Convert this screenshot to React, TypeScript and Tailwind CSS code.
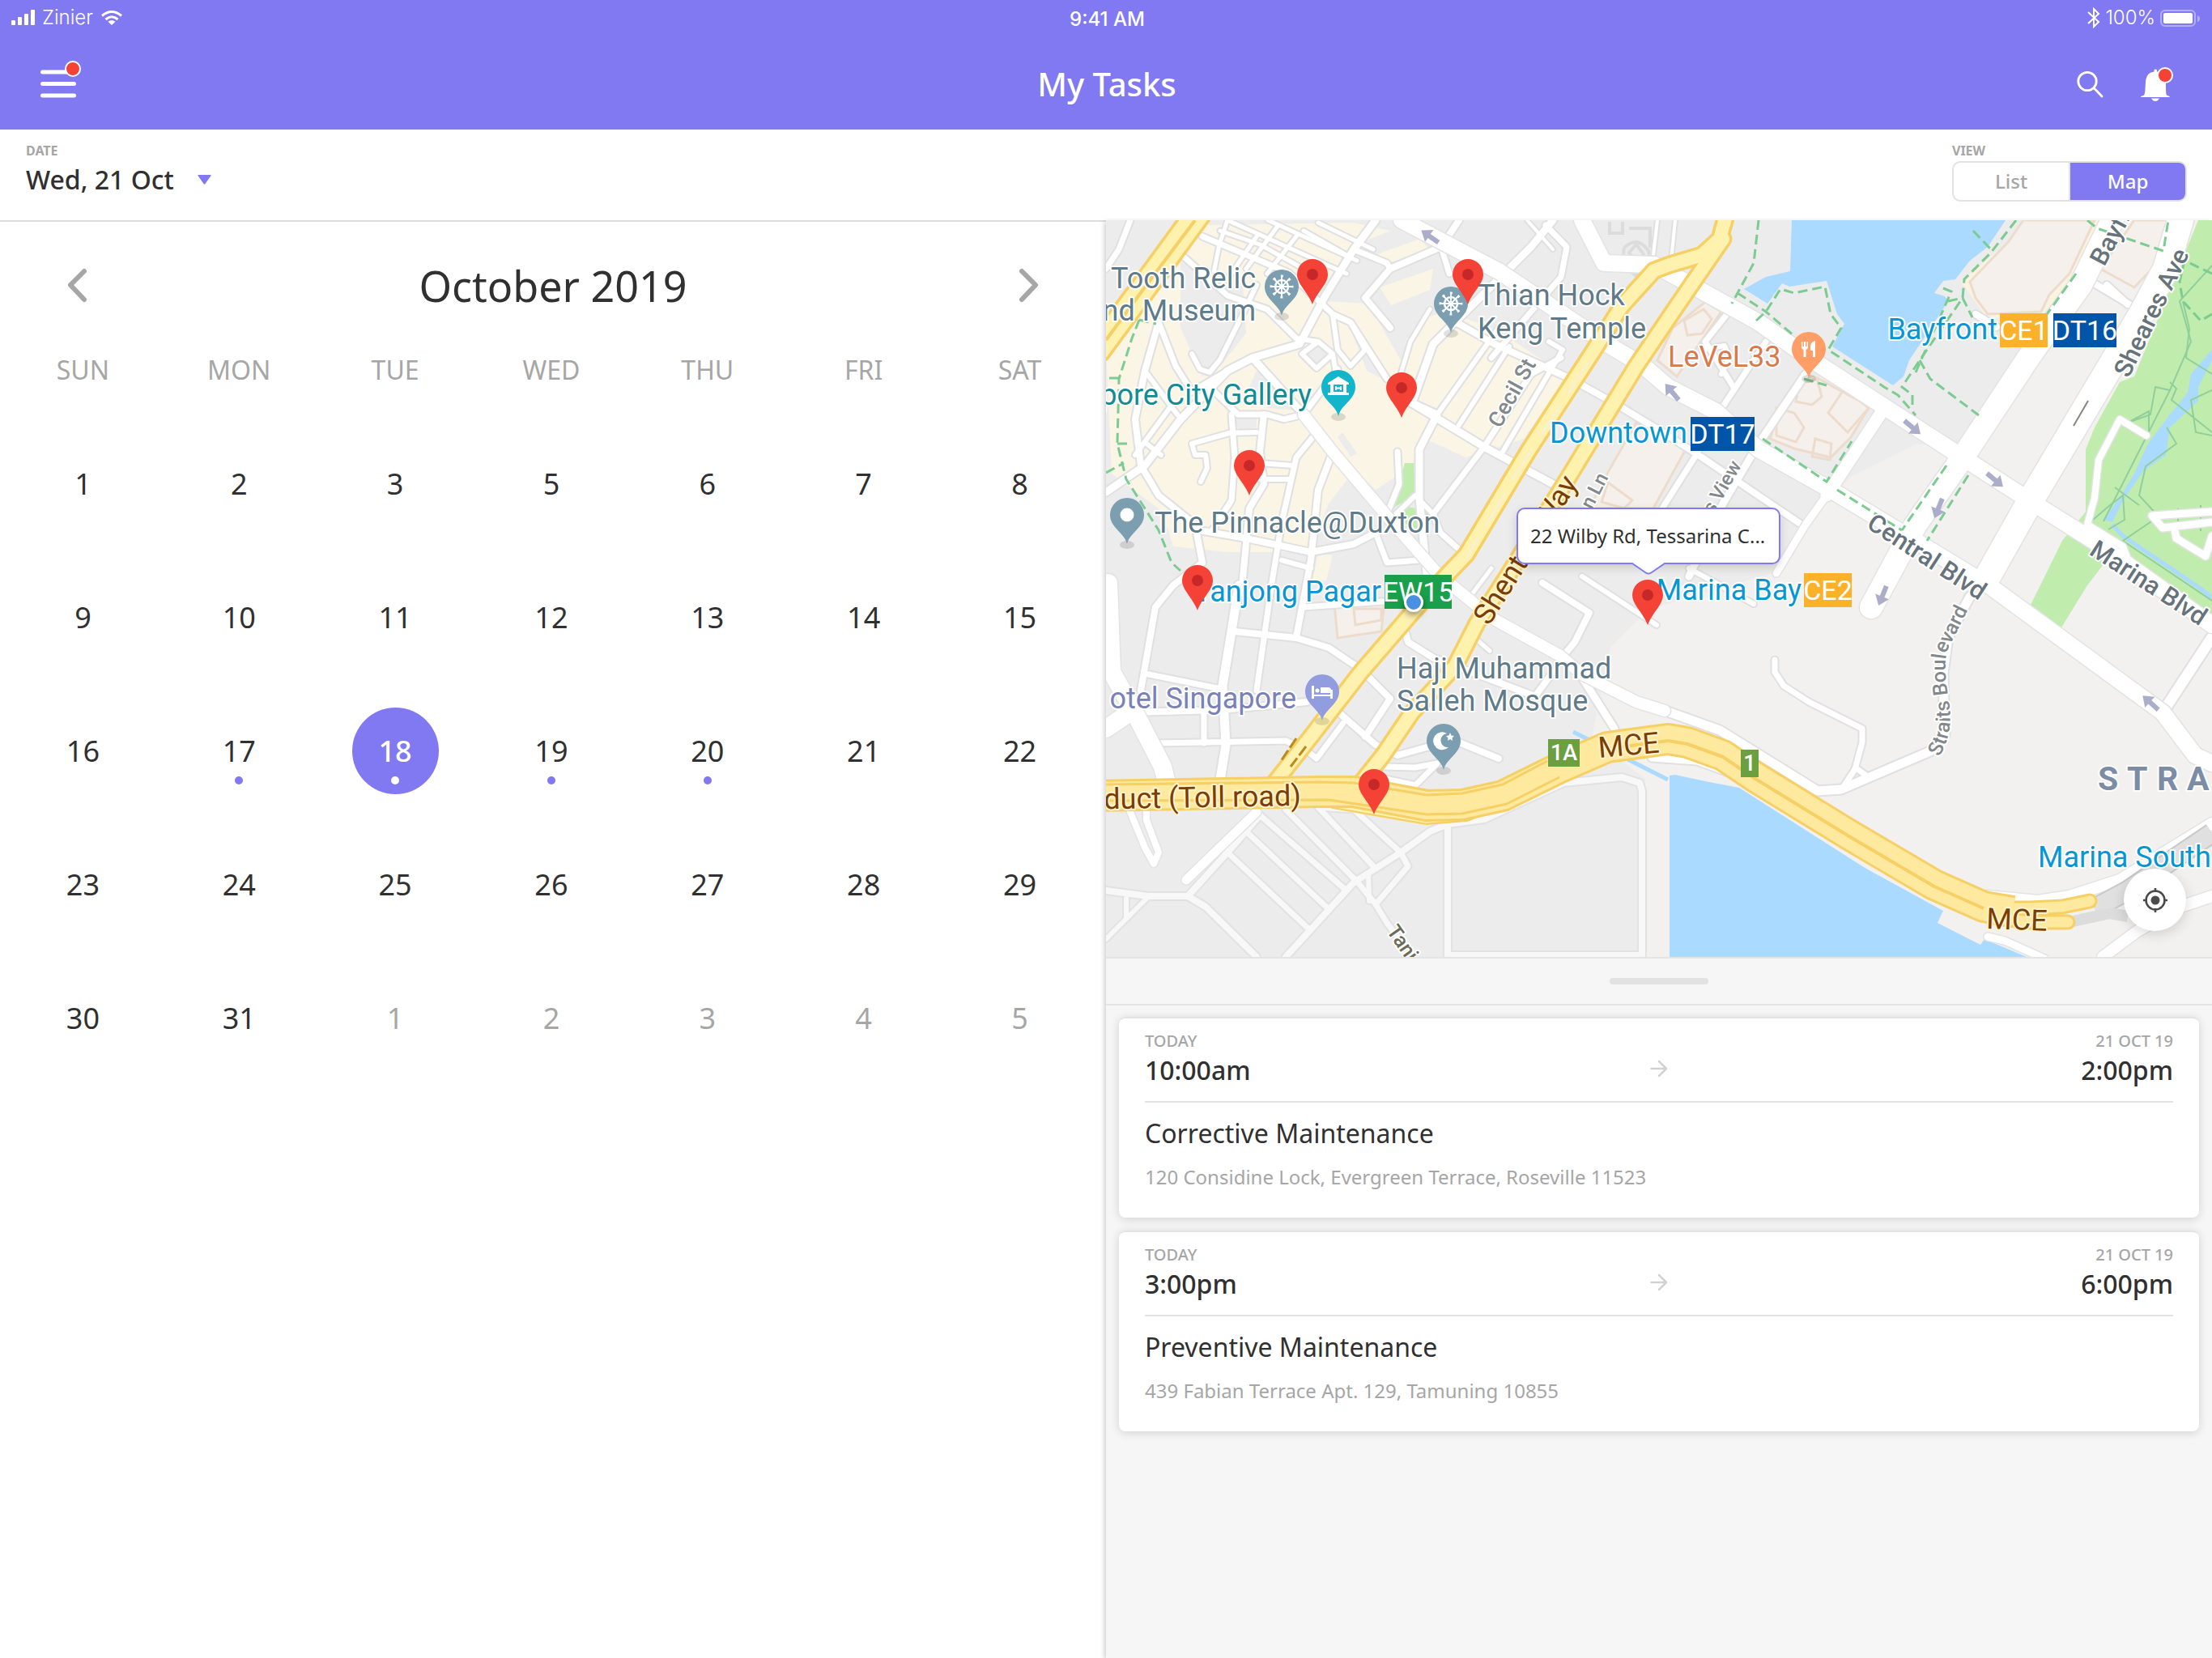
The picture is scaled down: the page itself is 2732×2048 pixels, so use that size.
import React from 'react';

type Line = { d: string; w: number };

const LAND_LIGHT =
  'M1001 276L921 316L864 376L824 436L669 481L623 528L606 608L600 640L666 690V910H1366V0H1240L1049 283Z';

const CREAM = [
  'M123 6L306 3L351 13L302 33L271 100L324 103L364 173L395 120L422 113L484 136L569 193L516 270L444 293L395 270L378 303L333 333L306 310L275 350L252 410H150L83 403L70 360L7 313L0 160L52 106L97 46Z',
  'M333 43L387 23L400 36L338 56Z',
  'M338 83L404 60L400 86L352 105Z',
  'M262 412L280 414L272 445H255Z',
];

const GREY_BLOCKS = [
  'M92 50L168 70L173 140L141 180L119 193L92 133Z',
  'M242 165L262 150L280 165L260 183Z',
  'M157 240H186V256L164 260Z',
  'M186 186L244 236L200 232L176 208Z',
  'M300 128L346 198L322 186Z',
  'M292 262L310 288L302 292L286 268Z',
];

const PARKS = [
  'M369 300H380L382 340L353 356Z',
  'M369 353L400 360L387 383L360 370Z',
  'M1349 0H1366V491L1305 450L1239 416L1212 451L1177 508L1148 491L1142 475L1153 453L1181 396L1210 360V283L1221 256L1252 200L1270 193Z',
];

const WATER = [
  'M847 0L845 63L815 70L788 85L817 103L835 78L844 82L890 75L903 116L912 128L897 156L972 204L985 193L992 173L1014 140L1040 100L1036 94L1023 90L1034 75L1049 73L1067 50L1089 33L1111 0Z',
  'M696 686L703 685L740 693L782 701L939 801L1034 853L1027 868L1080 895L1085 888L1137 910H696Z',
  'M1366 160L1340 190L1336 213L1314 240L1287 276L1270 313L1252 343L1232 370L1243 373L1256 346L1281 310L1309 290L1314 256L1349 223V206L1366 173Z',
];

const BUILDINGS = [
  'M1133 0L1115 26L1067 76L1074 96L1089 116L1155 113L1165 92L1190 66L1221 0Z',
  'M1261 13L1228 60L1270 83L1292 60L1305 26L1312 0H1270Z',
  'M857 196L873 192L943 230L920 268L895 293L850 282L820 270L837 223Z',
  'M740 101L760 113L705 193L681 173L700 133Z',
  'M655 250L716 283L676 356H597L619 313Z',
  'M282 474L344 470L340 508L286 516Z',
];

const BUILDING_DETAIL = [
  'M856 202L878 196L884 218L872 228L852 224Z',
  'M828 232L850 238L862 256L852 274L828 266Z',
  'M912 208L942 232L916 262L892 238Z',
  'M876 270L896 276L894 296L872 292Z',
  'M714 124L738 110L748 122L736 140L718 142Z',
  'M620 324L650 346L640 356L612 348Z',
  'M306 480H340V494L308 500Z',
];

const STREETS: Line[] = [
  { d: 'M119 20L226 65L280 116L302 126L347 196', w: 7 },
  { d: 'M97 46L150 93L199 110L235 146', w: 7 },
  { d: 'M333 0L306 36L271 93L239 153L181 170L150 186L92 246L48 303L0 336', w: 9 },
  { d: 'M65 126L48 186L36 246L43 303L65 340L110 376L119 423L83 451L61 478L43 581', w: 8 },
  { d: 'M65 126L86 180L106 212L150 186', w: 7 },
  { d: 'M106 165L116 184L128 188L141 172L168 118L186 80', w: 6 },
  { d: 'M244 240L220 246L199 240L163 240L128 206', w: 7 },
  { d: 'M181 170L244 240', w: 9 },
  { d: 'M48 186L88 240M36 290L80 230M50 276L68 290', w: 6 },
  { d: 'M244 240L286 184', w: 7 },
  { d: 'M195 240L190 286L195 326L177 356L168 453', w: 8 },
  { d: 'M262 260L235 293L217 373L204 453L186 581', w: 7 },
  { d: 'M280 286L262 333L253 420L235 515', w: 8 },
  { d: 'M155 240L159 293L155 346L130 385', w: 7 },
  { d: 'M115 383L173 393L253 410L306 400L333 386', w: 8 },
  { d: 'M186 262L152 263L106 276L110 290H123L125 306L117 323', w: 6 },
  { d: 'M190 300L231 303M190 320L226 320M217 420L253 430', w: 6 },
  { d: 'M436 0L414 33L351 60L320 96L351 133', w: 8 },
  { d: 'M306 36L347 53L351 60M414 33L424 66', w: 7 },
  { d: 'M235 146L262 150L280 165L260 183L242 165L262 150M280 165L286 200', w: 6 },
  { d: 'M280 116L286 160L302 180L320 160L302 126', w: 6 },
  { d: 'M552 0L525 33L431 126L404 153L378 226L409 240L387 283V343L396 436', w: 9 },
  { d: 'M400 110L376 150L364 190', w: 5 },
  { d: 'M378 226L467 280L552 326', w: 9 },
  { d: 'M427 123L480 153L574 196L628 226L694 266L736 293L859 376', w: 8 },
  { d: 'M485 133L409 240M498 156L436 253', w: 6 },
  { d: 'M543 6L569 33L562 70L476 170M562 170L525 190L467 280L404 363L413 386L440 410', w: 7 },
  { d: 'M547 150L564 160L490 286', w: 6 },
  { d: 'M150 0L140 30L132 70M186 20L150 73M213 6L173 60M235 20L199 66', w: 5 },
  { d: 'M141 13L190 30L244 60M150 0L297 66', w: 5 },
  { d: 'M262 3L330 36M244 13L297 43M200 0L310 50', w: 5 },
  { d: 'M30 0L16 36L0 60M0 120L16 140', w: 7 },
  { d: 'M351 370L382 340L404 363', w: 6 },
  { d: 'M360 286L362 326L347 363', w: 7 },
  { d: 'M333 386L347 423L387 420', w: 7 },
  { d: 'M164 451L155 508L144 575L148 648L141 691', w: 11 },
  { d: 'M159 508L235 516L275 528L315 555L351 591L320 638', w: 8 },
  { d: 'M244 478L342 471', w: 7 },
  { d: 'M30 608L141 605L248 595', w: 8 },
  { d: 'M61 646L222 643L248 655L260 665L293 621', w: 7 },
  { d: 'M48 560L137 578M121 608V646', w: 7 },
  { d: 'M284 605L333 648L360 661L396 651L436 645L485 665', w: 8 },
  { d: 'M367 498L373 521L405 541L530 588L552 558', w: 8 },
  { d: 'M539 448L597 485L579 521L565 538', w: 8 },
  { d: 'M588 565L628 628', w: 9 },
  { d: 'M342 675L382 676L409 671L382 698L345 690', w: 7 },
  { d: 'M458 518L474 532M476 430L452 462', w: 5 },
  { d: 'M588 440L680 500', w: 6 },
  { d: 'M864 190L806 276L762 350L720 440', w: 9 },
  { d: 'M815 150L758 236L727 293L687 356M767 116L740 150L775 206', w: 7 },
  { d: 'M736 160L764 155L770 170L760 190', w: 6 },
  { d: 'M703 0L698 50M681 0L676 43M520 0L552 36', w: 4 },
  { d: 'M674 600L758 630L879 705L908 703L1018 656L1036 635L1034 560L1040 515L1067 465', w: 11 },
  { d: 'M826 543V558L837 575L868 595L934 628V645L925 678L910 701M928 678L939 686', w: 7 },
  { d: 'M1366 515L1305 608', w: 13 },
  { d: 'M1217 76L1279 113M1236 80L1262 104M1290 84L1270 110', w: 8 },
  { d: 'M1074 116L1100 132', w: 8 },
  { d: 'M674 664L730 668L790 690', w: 9 },
  { d: 'M720 430L800 474', w: 6 },
];

const PALE_STREETS: Line[] = [
  { d: 'M262 725L306 728L364 781L373 798L333 845', w: 7 },
  { d: 'M190 735L150 781L101 835L52 835L0 828', w: 8 },
  { d: 'M101 835L123 848L186 910', w: 8 },
  { d: 'M190 735L297 828M222 728L311 818L333 845L347 868L364 890', w: 7 },
  { d: 'M262 725L333 801M173 755L275 851M150 781L251 876', w: 7 },
  { d: 'M222 910L306 818L364 781L400 755L422 746L467 740L565 695L637 688L659 695L662 705V908H422V746', w: 8 },
  { d: 'M324 808L325 841M52 836L0 888M25 838V861', w: 6 },
];

const AVENUES: Line[] = [
  { d: 'M3 448L7 558L39 615L70 675L74 691M0 628L25 611', w: 22 },
  { d: 'M244 240L280 286L351 370L409 436L476 491L561 538L588 561L655 595L690 606', w: 14 },
  { d: 'M365 0L485 63L619 153L664 180L694 206L753 236L806 283L895 333L983 386L1093 453L1305 608L1345 661L1366 671', w: 20 },
  { d: 'M588 0L615 53L677 55L806 126L868 170L1058 293L1151 353L1226 400L1366 500', w: 20 },
  { d: 'M956 240L890 340', w: 15 },
  { d: 'M890 340L864 376L828 436', w: 9 },
  { d: 'M1243 0L1204 80L1142 166L1058 293L1000 376L945 478', w: 28 },
  { d: 'M1327 0L1309 60L1279 116L1142 346L1089 440', w: 32 },
  { d: 'M186 731L99 815', w: 11 },
  { d: 'M30 731L48 775L59 795L65 781L50 741V725', w: 8 },
  { d: 'M1285 266L1252 246L1226 296L1221 343L1212 376L1256 403L1261 416', w: 8 },
  { d: 'M1366 360L1292 365L1305 380L1366 373M1320 383L1322 393L1358 415L1366 390', w: 9 },
  { d: 'M1089 835L1151 841L1190 835L1252 815L1366 745', w: 14 },
  { d: 'M1366 835L1327 848L1274 878L1231 910', w: 14 },
  { d: 'M1089 885L1110 890L1159 912', w: 9 },
];

const HIGHWAYS: Line[] = [
  { d: 'M115 -10L52 76L-10 160', w: 28 },
  { d: 'M767 -10L758 23L736 43L696 55L677 62L637 106L601 163L521 286L445 413L423 436L378 485L315 558L253 638L208 695', w: 16 },
  { d: 'M762 23L705 106L655 180L574 313L498 436L458 498L431 551L378 608L342 661L315 695', w: 16 },
];

const EXPRESSWAY =
  'M-10 711L262 706L306 706L396 723L440 722L490 711L557 678L619 651L694 641L718 645L762 661L802 688L921 761L1023 821L1084 848L1120 854';

const FOOTPATHS = [
  'M41 123L32 146L16 196L14 276L25 320L48 356L65 383L81 423L92 433',
  'M41 123L62 128M4 195H16M14 276L30 276M0 312L22 300',
  'M806 0L800 53L773 103M780 90L815 113L850 143',
  'M803 124L815 113L833 85L850 90L888 82L895 116L908 133L892 160L961 206L978 216L1000 241',
  'M1124 0L1093 40L1060 73L1058 96L1005 173L983 206L996 216V232',
  'M1040 100L1058 96L1070 120M1034 84L1044 88L1000 188',
  'M1005 173L1018 196L1078 241M1071 13L1093 36',
  'M1038 303L983 383M1065 315L1014 396M903 333L983 383',
  'M811 270L890 323L921 273M862 196L890 204M1198 66L1155 126',
  'M1212 0L1224 10L1306 38L1312 0M1366 66L1332 50L1326 76L1330 100L1352 124L1366 116',
];

const PARK_PATHS = [
  'M1366 56L1326 100L1340 150L1314 210L1232 372',
  'M1330 100L1338 134L1334 170L1366 190M1314 210L1296 206L1290 240L1262 250L1288 236V268',
  'M1314 200L1322 208L1316 222L1366 262M1366 210L1340 222L1346 262L1366 266',
  'M1310 256L1322 276L1284 304L1276 340L1300 366L1366 356M1246 330L1276 352',
  'M1212 376L1240 352L1256 340L1258 370L1238 382M1300 366L1256 396L1366 470M1324 356V382M1352 352V384',
];

const ARROWS: [number, number, number][] = [
  [400, 20, 215],
  [699, 212, 230],
  [996, 256, 40],
  [1098, 321, 40],
  [1028, 356, 112],
  [959, 464, 112],
  [1290, 596, 222],
];

type Pin = { x: number; y: number; color: string; glyph: React.ReactNode };

const wheel = (
  <g fill="none" stroke="#fff">
    <circle r="8" strokeWidth="2.5" />
    <path d="M0 -14V14M-14 0H14M-10 -10L10 10M10 -10L-10 10" strokeWidth="1.8" />
    <circle r="3" fill="#fff" />
    <circle r="13" strokeWidth="3" strokeDasharray="3 7.2" strokeDashoffset="1.5" />
  </g>
);

const PLACES: Pin[] = [
  { x: 217, y: 118, color: '#7b9eb0', glyph: wheel },
  { x: 426, y: 139, color: '#7b9eb0', glyph: wheel },
  {
    x: 287,
    y: 242,
    color: '#12b5c9',
    glyph: (
      <g>
        <path d="M-13 -5L0 -13L13 -5V-3H-13ZM-10 -3H10V7H-10ZM-13 7H13V10H-13Z" fill="#fff" />
        <path d="M-6 -3H6V6H-6Z" fill="#12b5c9" />
        <path d="M-3 -1V4M3 -1V4M-3 1.5H3" stroke="#fff" strokeWidth="2" />
      </g>
    ),
  },
  { x: 26, y: 400, color: '#7b9eb0', glyph: <circle r="8.5" fill="#fff" /> },
  {
    x: 267,
    y: 618,
    color: '#929de0',
    glyph: (
      <g fill="#fff">
        <path d="M-13 -7H-10V4H10V-2H13V9H10V6H-10V9H-13Z" />
        <circle cx="-6" cy="-1" r="2.5" />
        <path d="M-2 -5H8Q12 -4 12 2H-2Z" />
      </g>
    ),
  },
  {
    x: 417,
    y: 679,
    color: '#7b9eb0',
    glyph: (
      <g fill="#fff">
        <path d="M4 -9A11 11 0 1 0 6 8A8.5 8.5 0 1 1 4 -9Z" />
        <path d="M8 -10L9.5 -6.5L13 -6L10.5 -3.5L11 0L8 -2L5 0L5.5 -3.5L3 -6L6.5 -6.5Z" />
      </g>
    ),
  },
  {
    x: 868,
    y: 195,
    color: '#ff9e67',
    glyph: (
      <g fill="#fff">
        <path d="M-9 -9H-7.5V-3H-6V-9H-4V-3H-2.5V-9H-1V-2Q-1 0 -3.5 1V10H-6.5V1Q-9 0 -9 -2Z" />
        <path d="M8 -10V10H5V2H2V-4Q3 -9 8 -10Z" />
      </g>
    ),
  },
];

const TASK_PINS = [
  { x: 255, y: 104, label: 'Task near Buddha Tooth Relic' },
  { x: 447, y: 104, label: 'Task near Thian Hock Keng Temple' },
  { x: 365, y: 244, label: 'Task near City Gallery' },
  { x: 177, y: 340, label: 'Task near Pinnacle' },
  { x: 113, y: 482, label: 'Task near Tanjong Pagar' },
  { x: 669, y: 500, label: '22 Wilby Rd' },
  { x: 331, y: 734, label: 'Task near toll road' },
];

function Roads({ lines, casing, fill, edge = 4 }: { lines: Line[]; casing: string; fill: string; edge?: number }) {
  return (
    <g fill="none" strokeLinejoin="round" strokeLinecap="round">
      {lines.map((l) => (
        <path key={`c${l.d}`} d={l.d} stroke={casing} strokeWidth={l.w + edge} />
      ))}
      {lines.map((l) => (
        <path key={`f${l.d}`} d={l.d} stroke={fill} strokeWidth={l.w} />
      ))}
    </g>
  );
}

function Badge({ x, y, w, h, color, label, size }: { x: number; y: number; w: number; h: number; color: string; label: string; size: number }) {
  return (
    <g>
      <rect x={x} y={y} width={w} height={h} fill={color} />
      <text x={x + w / 2} y={y + h / 2 + size * 0.34} fill="#fff" fontSize={size} textAnchor="middle">
        {label}
      </text>
    </g>
  );
}

function CityMap() {
  return (
    <svg
      viewBox="0 0 1366 910"
      preserveAspectRatio="xMinYMin slice"
      className="block h-auto w-full font-[Roboto,sans-serif]"
      role="img"
      aria-label="Map of Singapore with task locations"
    >
      <rect width="1366" height="910" fill="#ececec" />
      <path d={LAND_LIGHT} fill="#f2f1ef" />
      <g fill="#faf5e4">{CREAM.map((d) => <path key={d} d={d} />)}</g>
      <g fill="#ececec">{GREY_BLOCKS.map((d) => <path key={d} d={d} />)}</g>
      <g fill="#c0ecae">{PARKS.map((d) => <path key={d} d={d} />)}</g>
      <g fill="#aadaff">{WATER.map((d) => <path key={d} d={d} />)}</g>
      <path d="M1243 376L1256 390L1349 453L1366 466M577 632L694 691" fill="none" stroke="#aadaff" strokeWidth="5" />
      <path d="M1133 0L1115 26L1056 76L1089 122L1155 118L1200 66L1228 0Z" fill="#fbf3df" />
      <g fill="#f5f0eb" stroke="#eddccb" strokeWidth="3">{BUILDINGS.map((d) => <path key={d} d={d} />)}</g>
      <g fill="none" stroke="#eddccb" strokeWidth="3">{BUILDING_DETAIL.map((d) => <path key={d} d={d} />)}</g>
      <path
        d="M622 2V16H638V2M646 10H672V34M640 34Q656 18 670 38Q676 58 654 68Q636 56 640 34M646 40L655 30L664 42L655 54Z"
        fill="none"
        stroke="#dcdcdc"
        strokeWidth="4"
      />
      <g fill="none" stroke="#90cf9c" strokeWidth="2">{PARK_PATHS.map((d) => <path key={d} d={d} />)}</g>

      <Roads lines={PALE_STREETS} casing="#e2e2e2" fill="#f8f8f8" />
      <Roads lines={STREETS} casing="#e0e0e2" fill="#ffffff" />
      <Roads lines={AVENUES} casing="#e3e3e3" fill="#ffffff" edge={3} />

      <g fill="none" stroke="#7ccb91" strokeWidth="3" strokeDasharray="12 6">{FOOTPATHS.map((d) => <path key={d} d={d} />)}</g>
      <path d="M1213 223L1195 254" stroke="#8b8581" strokeWidth="2" />
      <path d="M1221 850L1262 828L1310 795L1366 757" fill="none" stroke="#c9c9c9" strokeWidth="26" />
      <path d="M1221 850L1262 828L1310 795L1366 757" fill="none" stroke="#e0e0e0" strokeWidth="22" />
      <path d="M1190 867L1240 856L1262 860" fill="none" stroke="#dcdcdc" strokeWidth="14" />

      <Roads lines={HIGHWAYS} casing="#f6cf65" fill="#fff2af" edge={7} />
      <path d="M110 0L50 80L0 148" fill="none" stroke="#f6cf65" strokeWidth="4" />
      <path d="M596 175L521 290L445 417" fill="none" stroke="#f4f0e2" strokeWidth="2" strokeDasharray="46 18" />
      <path d="M235 640L216 668M247 650L228 675" fill="none" stroke="#b98a1d" strokeWidth="3" strokeDasharray="14 4" />
      <Roads
        lines={[
          { d: 'M1100 850L1142 850L1181 848L1215 841', w: 13 },
          { d: 'M1100 862L1140 867H1188', w: 13 },
        ]}
        casing="#f6cf65"
        fill="#ffe99e"
        edge={6}
      />
      <g fill="none" strokeLinejoin="round">
        <path d="M280 716L396 736L445 732L540 690" stroke="#f6cf65" strokeWidth="22" />
        <path d="M280 716L396 736L445 732L540 690" stroke="#fff2af" strokeWidth="17" />
        <path d={EXPRESSWAY} stroke="#f6cf65" strokeWidth="40" />
        <path d={EXPRESSWAY} stroke="#ffe99e" strokeWidth="34" />
        <path d="M-10 697L262 694L306 695L396 710L440 708L490 697L545 668" stroke="#f6cf65" strokeWidth="3" />
        <path d="M-10 717L275 716L396 734L440 733L495 721L560 688" stroke="#f6cf65" strokeWidth="3" />
        <path d="M619 653L694 643L718 647L762 663L802 690L921 763L1023 823L1084 850" stroke="#f6cf65" strokeWidth="4" />
      </g>

      {ARROWS.map(([x, y, r]) => (
        <path key={`${x}-${y}`} d="M-13 -3H1V-9L13 0L1 9V3H-13Z" transform={`translate(${x} ${y}) rotate(${r})`} fill="#abaecb" />
      ))}

      <g fontSize="36" stroke="#ffffff" strokeWidth="4" strokeLinejoin="round" paintOrder="stroke">
        <g fill="#5f7a88">
          <text x="185" y="84" textAnchor="end">Tooth Relic</text>
          <text x="185" y="124" textAnchor="end">nd Museum</text>
          <text x="459" y="105">Thian Hock</text>
          <text x="459" y="146">Keng Temple</text>
          <text x="60" y="386">The Pinnacle@Duxton</text>
          <text x="359" y="566">Haji Muhammad</text>
          <text x="359" y="606">Salleh Mosque</text>
        </g>
        <text x="254" y="228" textAnchor="end" fill="#128b92">pore City Gallery</text>
        <text x="235" y="603" textAnchor="end" fill="#7981b8">otel Singapore</text>
        <text x="694" y="181" fill="#d9794c">LeVeL33</text>
        <g fill="#0696d4">
          <text x="718" y="275" textAnchor="end">Downtown</text>
          <text x="1101" y="147" textAnchor="end">Bayfront</text>
          <text x="340" y="471" textAnchor="end">Tanjong Pagar</text>
          <text x="859" y="469" textAnchor="end">Marina Bay</text>
          <text x="1151" y="799">Marina South</text>
        </g>
        <g fill="#7a3d02" stroke="#fff4cf">
          <text transform="translate(241 723) rotate(-1)" textAnchor="end">duct (Toll road)</text>
          <text transform="translate(473 502) rotate(-58)">Shenton Way</text>
          <text transform="translate(609 664) rotate(-5)">MCE</text>
          <text transform="translate(1087 875) rotate(2)">MCE</text>
        </g>
        <g fill="#66737b" fontWeight="500" fontSize="31">
          <text transform="translate(938 379) rotate(33)">Central Blvd</text>
          <text transform="translate(1213 412) rotate(33)">Marina Blvd</text>
          <text transform="translate(1263 196) rotate(-64)">Sheares Ave</text>
          <text transform="translate(1233 58) rotate(-62)">Bayfront</text>
        </g>
        <g fill="#82888b" fontWeight="500" fontSize="27">
          <text transform="translate(487 258) rotate(-61)">Cecil St</text>
          <text transform="translate(600 358) rotate(-63)" fontSize="24">n Ln</text>
          <text transform="translate(750 364) rotate(-60)" fontSize="24">s View</text>
          <path id="straits" d="M1029 663Q1046 636 1042 600Q1032 540 1041 528L1068 474" fill="none" stroke="none" />
          <text fontSize="25">
            <textPath href="#straits">Straits Boulevard</textPath>
          </text>
          <text transform="translate(346 878) rotate(55)" fill="#6d6b58" fontSize="25">Tanjong</text>
        </g>
        <text x="1225 1261 1298 1335" y="704" fill="#7b8da6" fontWeight="700" fontSize="41">STRA</text>
      </g>

      <Badge x={722} y={243} w={79} h={42} color="#0055a8" label="DT17" size={34} />
      <Badge x={1104} y={115} w={59} h={42} color="#fbb12a" label="CE1" size={34} />
      <Badge x={1170} y={115} w={78} h={42} color="#0055a8" label="DT16" size={34} />
      <Badge x={862} y={436} w={59} h={42} color="#fbb12a" label="CE2" size={34} />
      <Badge x={344} y={438} w={83} h={42} color="#1aa04b" label="EW15" size={34} />
      <g fontWeight="500">
        <Badge x={546} y={641} w={39} h={34} color="#6b9f40" label="1A" size={27} />
        <Badge x={784} y={654} w={22} h={34} color="#6b9f40" label="1" size={27} />
      </g>

      {PLACES.map((p) => (
        <g key={`${p.x}-${p.y}`} transform={`translate(${p.x} ${p.y})`}>
          <ellipse cy="1" rx="9" ry="5" fill="#000" opacity="0.12" />
          <path d="M0 0C-3 -14 -21 -20 -21 -36A21 21 0 0 1 21 -36C21 -20 3 -14 0 0Z" fill={p.color} />
          <g transform="translate(0 -36)">{p.glyph}</g>
        </g>
      ))}
    </svg>
  );
}

const percent = (value: number, total: number) => `${(value / total) * 100}%`;

function MapPanel() {
  return (
    <div className="relative overflow-hidden">
      <CityMap />
      {TASK_PINS.map((p) => (
        <button
          key={p.label}
          type="button"
          aria-label={p.label}
          className="absolute -translate-x-1/2 -translate-y-full"
          style={{ left: percent(p.x, 1366), top: percent(p.y, 910) }}
        >
          <svg viewBox="0 0 38 56" className="block h-14 w-[38px]">
            <path d="M19 0A19 19 0 0 0 0 19C0 31 13 40 19 56C25 40 38 31 38 19A19 19 0 0 0 19 0Z" fill="#f44336" />
            <circle cx="19" cy="19" r="7" fill="#c62828" />
          </svg>
        </button>
      ))}
      <span
        className="absolute size-6 -translate-1/2 rounded-full border-[3px] border-white bg-[#4a90e2] shadow-[0_4px_8px_rgba(0,0,0,0.4)]"
        style={{ left: percent(380, 1366), top: percent(472, 910) }}
      />
      <div
        className="absolute -translate-x-1/2 -translate-y-full"
        style={{ left: percent(670, 1366), top: percent(425, 910) }}
      >
        <div className="flex h-[70px] w-[326px] items-center rounded-[10px] border-2 border-[#8179f1] bg-white pl-[15px] text-2xl whitespace-nowrap text-[#303030] shadow-[0_4px_12px_rgba(0,0,0,0.15)]">
          22 Wilby Rd, Tessarina C...
        </div>
        <svg viewBox="0 0 44 16" className="absolute top-full left-1/2 -mt-0.5 h-4 w-11 -translate-x-1/2">
          <path d="M0 0H44L26 12Q22 15 18 12Z" fill="#fff" />
          <path d="M0 1H2L18 12Q22 15 26 12L42 1H44" fill="none" stroke="#8179f1" strokeWidth="2" />
        </svg>
      </div>
      <button
        type="button"
        aria-label="Center on my location"
        className="absolute right-8 bottom-8 flex size-[77px] items-center justify-center rounded-full bg-white shadow-[0_4px_16px_rgba(0,0,0,0.15)]"
      >
        <svg viewBox="0 0 32 32" className="size-8" fill="none" stroke="#4a4a4a" strokeWidth="2.5">
          <circle cx="16" cy="16" r="11.5" />
          <circle cx="16" cy="16" r="5.5" fill="#4a4a4a" stroke="none" />
          <path d="M16 1V6M16 26V31M1 16H6M26 16H31" />
        </svg>
      </button>
    </div>
  );
}

function StatusBar() {
  return (
    <div className="grid h-10 grid-cols-3 items-center pr-[15px] pl-3.5 font-[Inter,sans-serif] text-2xl leading-10">
      <div className="flex items-center">
        <svg viewBox="0 0 30 20" className="mr-2 h-5 w-[30px]" fill="#fff">
          <rect x="0" y="13" width="5" height="6" rx="1" />
          <rect x="8" y="9" width="5" height="10" rx="1" />
          <rect x="16" y="5" width="5" height="14" rx="1" />
          <rect x="24" y="0" width="5" height="19" rx="1" />
        </svg>
        <span className="mr-2.5 font-light">Zinier</span>
        <svg viewBox="0 0 26 18" className="h-[18px] w-[26px]" fill="none" stroke="#fff" strokeWidth="3">
          <path d="M1 6.5Q13 -3.5 25 6.5" />
          <path d="M5.5 11Q13 4.5 20.5 11" />
          <path d="M13 18L8.5 13.8Q13 10.2 17.5 13.8Z" fill="#fff" stroke="none" />
        </svg>
      </div>
      <div className="pt-1 pl-1 text-center font-medium">9:41 AM</div>
      <div className="flex items-center justify-end">
        <svg viewBox="0 0 16 26" className="mr-1.5 h-[26px] w-4" fill="none" stroke="#fff" strokeWidth="2">
          <path d="M1 6L14 18L8 24V2L14 8L1 20" />
        </svg>
        <span className="mr-1.5 font-light">100%</span>
        <svg viewBox="0 0 49 21" className="h-[21px] w-[49px]">
          <rect x="1" y="1" width="42" height="19" rx="5" fill="none" stroke="#fff" strokeOpacity="0.4" strokeWidth="2" />
          <rect x="4" y="4" width="36" height="13" rx="2" fill="#fff" />
          <path d="M46 7Q49 8 49 11Q49 14 46 15Z" fill="#fff" fillOpacity="0.4" />
        </svg>
      </div>
    </div>
  );
}

function Header() {
  return (
    <header className="bg-[#8179f1] text-white">
      <StatusBar />
      <div className="grid h-[120px] grid-cols-3 items-center pt-2 pr-12 pl-[50px]">
        <button type="button" aria-label="Open menu" className="w-fit">
          <svg viewBox="0 0 50 58" className="block h-[58px] w-[50px]">
            <path d="M2.5 14H41.5M2.5 28.5H41.5M2.5 43H41.5" stroke="#fff" strokeWidth="5" strokeLinecap="round" />
            <circle cx="40" cy="10" r="9" fill="#f44336" stroke="#fff" strokeWidth="2" />
          </svg>
        </button>
        <h1 className="text-center text-[40px] leading-[56px] font-medium">My Tasks</h1>
        <div className="flex items-center justify-end gap-[46px]">
          <button type="button" aria-label="Search">
            <svg viewBox="0 0 34 34" className="block size-[34px]" fill="none" stroke="#fff" strokeWidth="2.8" strokeLinecap="round">
              <circle cx="14" cy="13.5" r="11.2" />
              <path d="M22 21.5L32 32" />
            </svg>
          </button>
          <button type="button" aria-label="Notifications">
            <svg viewBox="0 0 40 42" className="block h-[42px] w-10">
              <path
                d="M16.5 5.5V3.5A2 2 0 0 1 20 3.5V5.5C27 6 31 11 31 18C31 26 31 33 32 34.5C33 35.5 36 35.5 36 37H0C0 35.5 3 35.5 4 34.5C5.5 33 5.5 26 6 18C6.5 11 10 6 16.5 5.5Z"
                fill="#fff"
              />
              <path d="M13 38.5H23Q21 42 18 42Q15 42 13 38.5Z" fill="#fff" />
              <circle cx="30" cy="10" r="9" fill="#f44336" stroke="#fff" strokeWidth="2" />
            </svg>
          </button>
        </div>
      </div>
    </header>
  );
}

function Toolbar() {
  return (
    <div className="flex h-28 justify-between bg-white pr-[31px] pl-8">
      <div className="pt-3.5">
        <div id="date-label" className="text-base leading-6 font-bold text-[#a6a6a6]">DATE</div>
        <button type="button" aria-labelledby="date-label date-value" className="flex items-center gap-[29px]">
          <span id="date-value" className="text-[32px] leading-[48px] font-medium text-[#303030]">Wed, 21 Oct</span>
          <svg viewBox="0 0 17 12" className="h-3 w-[17px]" fill="#8179f1">
            <path d="M1 0H16Q17 0 16.5 1L9.5 11Q8.5 12 7.5 11L0.5 1Q0 0 1 0Z" />
          </svg>
        </button>
      </div>
      <div className="pt-3.5">
        <div className="text-base leading-6 font-bold text-[#a6a6a6]">VIEW</div>
        <div className="mt-px flex h-[50px] w-[290px] overflow-hidden rounded-[10px] border-2 border-[#e2e2e2] text-2xl font-medium">
          <button type="button" className="flex-1 text-[#a6a6a6]">List</button>
          <button type="button" aria-pressed="true" className="flex-1 border-l-2 border-[#e2e2e2] bg-[#8179f1] text-white">Map</button>
        </div>
      </div>
    </div>
  );
}

const WEEKDAYS = ['SUN', 'MON', 'TUE', 'WED', 'THU', 'FRI', 'SAT'];

const WEEKS: number[][] = [
  [1, 2, 3, 5, 6, 7, 8],
  [9, 10, 11, 12, 13, 14, 15],
  [16, 17, 18, 19, 20, 21, 22],
  [23, 24, 25, 26, 27, 28, 29],
  [30, 31, 1, 2, 3, 4, 5],
];

const BUSY = [17, 18, 19, 20];

function Day({ day, outside }: { day: number; outside: boolean }) {
  const selected = day === 18;
  const tone = selected ? 'bg-[#8179f1] font-medium text-white' : outside ? 'text-[#a6a6a6]' : 'text-[#303030]';
  return (
    <button type="button" className={`relative block mx-auto size-[107px] rounded-full text-4xl ${tone}`}>
      {day}
      {BUSY.includes(day) && (
        <span className={`absolute bottom-3 left-1/2 size-2.5 -translate-x-1/2 rounded-full ${selected ? 'bg-white' : 'bg-[#8179f1]'}`} />
      )}
    </button>
  );
}

function Calendar() {
  return (
    <section className="flex-1 border-t-2 border-[#dcdcdc] bg-white">
      <div className="flex h-[158px] items-center justify-between px-[82px]">
        <button type="button" aria-label="Previous month">
          <svg viewBox="0 0 28 44" className="block h-11 w-7" fill="none" stroke="#a6a6a6" strokeWidth="6" strokeLinecap="round" strokeLinejoin="round">
            <path d="M22 4L5 21L22 39" />
          </svg>
        </button>
        <h2 className="text-[52px] leading-[72px] text-[#303030]">October 2019</h2>
        <button type="button" aria-label="Next month">
          <svg viewBox="0 0 28 44" className="block h-11 w-7" fill="none" stroke="#a6a6a6" strokeWidth="6" strokeLinecap="round" strokeLinejoin="round">
            <path d="M6 4L23 21L6 39" />
          </svg>
        </button>
      </div>
      <table className="mr-2.5 ml-1.5 w-[calc(100%-16px)] table-fixed text-center">
        <thead>
          <tr className="text-[32px] leading-[50px] text-[#a6a6a6]">
            {WEEKDAYS.map((d) => (
              <th key={d} scope="col" className="p-0 pb-1 font-normal">{d}</th>
            ))}
          </tr>
        </thead>
        <tbody>
          {WEEKS.map((week, w) => (
            <tr key={week[0]}>
              {week.map((day) => (
                <td key={day} className="p-0 pt-[58px]">
                  <Day day={day} outside={w === 4 && day < 30} />
                </td>
              ))}
            </tr>
          ))}
        </tbody>
      </table>
    </section>
  );
}

const TASKS = [
  { start: '10:00am', end: '2:00pm', title: 'Corrective Maintenance', address: '120 Considine Lock, Evergreen Terrace, Roseville 11523' },
  { start: '3:00pm', end: '6:00pm', title: 'Preventive Maintenance', address: '439 Fabian Terrace Apt. 129, Tamuning 10855' },
];

function TaskCard({ start, end, title, address }: (typeof TASKS)[number]) {
  return (
    <article className="h-[248px] rounded-lg border-t-2 border-[#e4e4e4] bg-white px-8 pt-3.5 shadow-[0_2px_12px_rgba(0,0,0,0.15)]">
      <div className="grid h-[90px] grid-cols-3 items-start border-b-2 border-[#e2e2e2]">
        <div>
          <div className="text-xl leading-7 font-medium text-[#a6a6a6]">TODAY</div>
          <div className="text-[32px] leading-11 font-medium text-[#303030]">{start}</div>
        </div>
        <svg viewBox="0 0 22 22" className="mt-[37px] size-[22px] justify-self-center" fill="none" stroke="#d2d2d2" strokeWidth="2.5" strokeLinecap="round" strokeLinejoin="round">
          <path d="M1.5 11H20M11 2L20 11L11 20" />
        </svg>
        <div className="text-right">
          <div className="text-xl leading-7 font-medium text-[#a6a6a6]">21 OCT 19</div>
          <div className="text-[32px] leading-11 font-medium text-[#303030]">{end}</div>
        </div>
      </div>
      <h3 className="pt-3.5 text-[32px] leading-12 text-[#303030]">{title}</h3>
      <p className="pt-3 text-2xl leading-9 text-[#a6a6a6]">{address}</p>
    </article>
  );
}

export default function App() {
  return (
    <div className='flex min-h-screen flex-col bg-white font-["Noto_Sans","Open_Sans",sans-serif]'>
      <Header />
      <Toolbar />
      <main className="flex flex-1">
        <Calendar />
        <section className="z-10 flex-1 bg-[#f6f6f6] shadow-[-2px_2px_6px_rgba(0,0,0,0.2)]">
          <MapPanel />
          <div className="flex h-[60px] items-center justify-center border-y-2 border-[#e4e4e4]">
            <button type="button" aria-label="Resize task list" className="h-2 w-[122px] rounded bg-[#e2e2e2]" />
          </div>
          <div className="flex flex-col gap-4 p-4 pt-3.5">
            {TASKS.map((t) => (
              <TaskCard key={t.start} {...t} />
            ))}
          </div>
        </section>
      </main>
    </div>
  );
}
